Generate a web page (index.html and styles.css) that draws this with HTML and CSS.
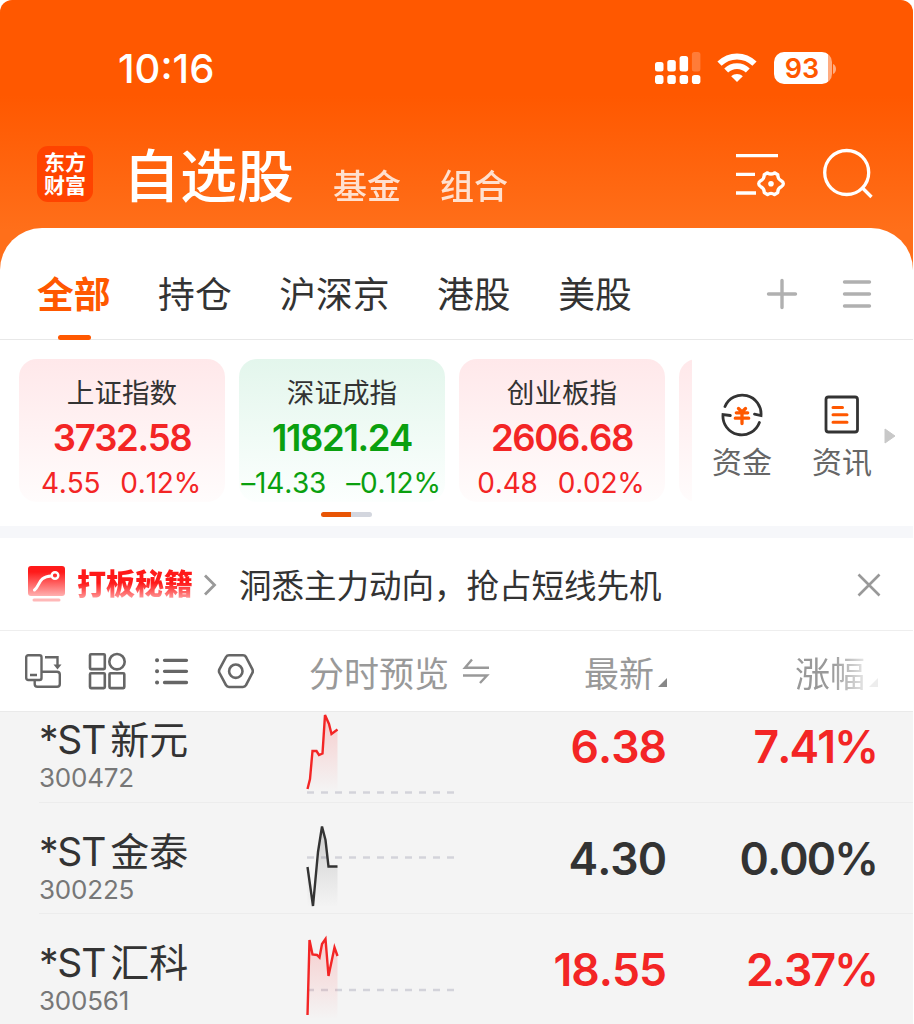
FILE: index.html
```html
<!DOCTYPE html>
<html lang="zh-CN">
<head>
  <meta charset="UTF-8">
  <meta name="viewport" content="width=device-width, initial-scale=1.0">
  <title>自选股</title>
  <link rel="stylesheet" href="styles.css">
</head>
<body>
  <div class="app">
    <header class="header">
      <div class="status-bar">
        <span class="time">10:16</span>
        <div class="status-icons">
          <svg class="signal" width="46" height="34" viewBox="0 0 46 34" fill="#fff">
            <rect x="0" y="10" width="8.5" height="9.5" rx="2.5"/>
            <rect x="12.3" y="8" width="8.5" height="11.5" rx="2.5"/>
            <rect x="24.6" y="4" width="8.5" height="15.5" rx="2.5"/>
            <rect x="36.9" y="0" width="8.5" height="19.5" rx="2.5" opacity=".22"/>
            <rect x="0" y="23" width="8.5" height="9" rx="2.8"/>
            <rect x="12.3" y="23" width="8.5" height="9" rx="2.8"/>
            <rect x="24.6" y="23" width="8.5" height="9" rx="2.8"/>
            <rect x="36.9" y="23" width="8.5" height="9" rx="2.8"/>
          </svg>
          <svg class="wifi" width="40" height="34" viewBox="0 0 40 34">
            <path d="M2.500 11.700C12.500 2 27.500 2 37.500 11.700" fill="none" stroke="#fff" stroke-width="6"/>
            <path d="M9.200 18.500C15.200 12.700 24.800 12.700 30.800 18.500" fill="none" stroke="#fff" stroke-width="5.600"/>
            <path d="M14.200 24.200C17.500 21.100 22.500 21.100 25.800 24.200L20 30Z" fill="#fff"/>
          </svg>
          <div class="battery"><span>93</span></div>
          <svg class="battery-tip" width="4" height="10" viewBox="0 0 4 10"><path d="M0 0C4 1.500 4 8.500 0 10Z" fill="#fff" opacity=".5"/></svg>
        </div>
      </div>
      <div class="title-bar">
        <div class="logo">东方<br>财富</div>
        <h1>自选股</h1>
        <a class="sub">基金</a>
        <a class="sub">组合</a>
        <svg class="manage" width="52" height="48" viewBox="0 0 52 48" fill="none" stroke="#fff" stroke-width="3.3">
          <path d="M1 4.700H43M1 23.300H20M1 42H21"/>
          <path stroke-linejoin="round" d="M32.500 21.800Q36 24.300 39.500 21.800L42.800 23.700Q42.500 27.800 46.200 29.700Q48.500 31 48.300 32.700Q48.500 34.400 46.200 35.700Q42.500 37.600 42.800 41.500L39.500 43.600Q36 41.200 32.500 43.600L29.200 41.500Q29.500 37.600 25.800 35.700Q23.700 34.400 23.700 32.700Q23.700 31 25.800 29.700Q29.500 27.800 29.200 23.700Z"/>
          <circle cx="36" cy="32.700" r="2.800" fill="#fff" stroke="none"/>
        </svg>
        <svg class="search" width="52" height="52" viewBox="0 0 52 52" fill="none" stroke="#fff" stroke-width="3.300">
          <circle cx="24.700" cy="24.500" r="22"/>
          <path d="M39.500 39L49.500 49"/>
        </svg>
      </div>
    </header>

    <main class="panel">
      <nav class="tabs">
        <a class="tab active">全部</a>
        <a class="tab">持仓</a>
        <a class="tab">沪深京</a>
        <a class="tab">港股</a>
        <a class="tab">美股</a>
        <svg class="add" width="32" height="32" viewBox="0 0 32 32" stroke="#b0b0b0" stroke-width="3.400" stroke-linecap="round"><path d="M2.500 16H29.500M16 2.500V29.500"/></svg>
        <svg class="menu" width="30" height="32" viewBox="0 0 30 32" stroke="#b0b0b0" stroke-width="3.400" stroke-linecap="round"><path d="M2.500 4H27.500M2.500 16H27.500M2.500 28H27.500"/></svg>
      </nav>

      <section class="market">
        <div class="cards">
          <div class="card up">
            <div class="card-name">上证指数</div>
            <div class="card-value">3732.58</div>
            <div class="card-change"><span>4.55</span><span>0.12%</span></div>
          </div>
          <div class="card down">
            <div class="card-name">深证成指</div>
            <div class="card-value">11821.24</div>
            <div class="card-change"><span>–14.33</span><span>–0.12%</span></div>
          </div>
          <div class="card up">
            <div class="card-name">创业板指</div>
            <div class="card-value">2606.68</div>
            <div class="card-change"><span>0.48</span><span>0.02%</span></div>
          </div>
          <div class="card up"></div>
        </div>
        <div class="shortcut">
          <svg width="44" height="44" viewBox="0 0 44 44" fill="none" stroke="#333" stroke-width="2.800" stroke-linecap="round">
            <path d="M5 13.500A18.800 18.800 0 0 1 41 22.500L34.500 21.200"/>
            <path d="M39.400 29.500A18.800 18.800 0 0 1 3 21.500L10.300 22.500"/>
            <path stroke="#ff5800" stroke-width="3.300" d="M18.500 15.500L22 19L25.500 15.500M16.300 19.800H27.700M15.300 25.200H28.700M22 19.800V30.500"/>
          </svg>
          <span>资金</span>
        </div>
        <div class="shortcut">
          <svg width="44" height="44" viewBox="0 0 44 44" fill="none" stroke="#333" stroke-width="2.800" stroke-linecap="round">
            <rect x="6" y="4" width="31.500" height="35" rx="2.500"/>
            <path stroke="#ff5800" stroke-width="3" d="M13 14.500H22.500M13 21.800H27M13 29.200H27"/>
          </svg>
          <span>资讯</span>
        </div>
        <svg class="more" width="12" height="16" viewBox="0 0 12 16"><path d="M1 1L11 8L1 15Z" fill="#c8c8c8" stroke="#c8c8c8" stroke-linejoin="round"/></svg>
      </section>
      <div class="pager"><i></i></div>

      <section class="promo">
        <svg class="promo-icon" width="38" height="37" viewBox="0 0 38 37">
          <defs>
            <linearGradient id="promo-red" x1="0" y1="0" x2="0" y2="1">
              <stop offset=".2" stop-color="#ff1a1a"/>
              <stop offset="1" stop-color="#ffb0b0"/>
            </linearGradient>
          </defs>
          <rect width="37" height="30" rx="3" fill="url(#promo-red)"/>
          <path d="M6.500 24C12 20 10 10.500 23.500 10" fill="none" stroke="#fff" stroke-width="3" stroke-linecap="round"/>
          <circle cx="27" cy="9.500" r="3.300" fill="none" stroke="#fff" stroke-width="2.400"/>
          <rect x="4.500" y="32.500" width="28" height="3" rx="1.500" fill="#ffb8b8"/>
        </svg>
        <strong class="promo-title">打板秘籍</strong>
        <svg class="promo-arrow" width="14" height="22" viewBox="0 0 14 22" fill="none" stroke="#999" stroke-width="2.800"><path d="M2 1.500L11.500 11L2 20.500"/></svg>
        <span class="promo-text">洞悉主力动向，抢占短线先机</span>
        <svg class="close" width="24" height="24" viewBox="0 0 24 24" stroke="#999" stroke-width="2.600"><path d="M1.500 1.500L22.500 22.500M22.500 1.500L1.500 22.500"/></svg>
      </section>

      <section class="list-head">
        <div class="tools">
          <svg width="38" height="38" viewBox="0 0 38 38" fill="none" stroke="#666" stroke-width="2.400">
            <rect x="2.200" y="3.200" width="15.300" height="24.800" rx="2"/>
            <path d="M6 23H13M18 19.700H33Q35.800 19.700 35.800 22.500V32Q35.800 34.800 33 34.800H13.500Q10.700 34.800 10.700 32V28"/>
            <path d="M21 5.200H33.500V14"/>
            <path d="M29.500 12.500H37.500L33.500 17.500Z" fill="#666" stroke="none"/>
          </svg>
          <svg width="38" height="38" viewBox="0 0 38 38" fill="none" stroke="#666" stroke-width="2.600">
            <rect x="2" y="2.300" width="14.800" height="14.800" rx="1"/>
            <circle cx="29" cy="9.700" r="7.700"/>
            <rect x="2" y="21.300" width="14.800" height="14.800" rx="1"/>
            <rect x="21.500" y="21.300" width="14.800" height="14.800" rx="1"/>
          </svg>
          <svg width="38" height="38" viewBox="0 0 38 38" stroke="#666" stroke-width="3.300" stroke-linecap="round">
            <path d="M12.500 8.300H34.500M12.500 19.300H34.500M12.500 30.500H34.500"/>
            <path stroke-width="4" d="M5 8.300H5.100M5 19.300H5.100M5 30.500H5.100"/>
          </svg>
          <svg width="38" height="38" viewBox="0 0 38 38" fill="none" stroke="#666" stroke-width="2.600">
            <path stroke-linejoin="round" d="M13 3.200H27Q29 3.200 30 5L36.300 17.200Q37.300 19.200 36.300 21L30 33.200Q29 35 27 35H13Q11 35 10 33.200L3.500 21Q2.500 19.200 3.500 17.200L10 5Q11 3.200 13 3.200Z"/>
            <circle cx="19.800" cy="19.200" r="6.700"/>
          </svg>
        </div>
        <div class="col-preview">
          <span>分时预览</span>
          <svg width="28" height="28" viewBox="0 0 28 28" fill="none" stroke="#999" stroke-width="2.400"><path d="M27 10.700H3L10 2.500M1 18.500H25L18 26"/></svg>
        </div>
        <div class="col-price">最新<i class="sort"></i></div>
        <div class="col-rate">涨幅<i class="sort"></i></div>
      </section>

      <section class="list">
        <div class="row">
          <div class="stock">
            <div class="name">*ST<b>新元</b></div>
            <div class="code">300472</div>
          </div>
          <svg class="spark" width="160" height="111" viewBox="0 0 160 111" fill="none">
            <defs>
              <linearGradient id="fill-red" x1="0" y1="0" x2="0" y2="1">
                <stop offset="0" stop-color="#ff3030" stop-opacity=".2"/>
                <stop offset="1" stop-color="#ff3030" stop-opacity="0"/>
              </linearGradient>
              <linearGradient id="fill-gray" x1="0" y1="0" x2="0" y2="1">
                <stop offset="0" stop-color="#333" stop-opacity=".2"/>
                <stop offset="1" stop-color="#333" stop-opacity="0"/>
              </linearGradient>
            </defs>
            <path class="base" d="M7 101.500H154"/>
            <path fill="url(#fill-red)" d="M7.500 98L10 88L12.500 60H16.500L19 64L22.500 62.500L25 24L29 33L31.500 43L37.500 38.500V101H7.500Z"/>
            <path class="line red" d="M7.500 98L10 88L12.500 60H16.500L19 64L22.500 62.500L25 24L29 33L31.500 43L37.500 38.500"/>
          </svg>
          <div class="price red">6.38</div>
          <div class="rate red">7.41%</div>
        </div>
        <div class="row">
          <div class="stock">
            <div class="name">*ST<b>金泰</b></div>
            <div class="code">300225</div>
          </div>
          <svg class="spark" width="160" height="111" viewBox="0 0 160 111" fill="none">
            <path class="base" d="M7 55.500H154"/>
            <path fill="url(#fill-gray)" d="M7.500 65L13 104L18 50L22 24.500L25.500 38L28.500 64.500H37.500V105H7.500Z"/>
            <path class="line" d="M7.500 65L13 104L18 50L22 24.500L25.500 38L28.500 64.500H37.500"/>
          </svg>
          <div class="price">4.30</div>
          <div class="rate">0.00%</div>
        </div>
        <div class="row">
          <div class="stock">
            <div class="name">*ST<b>汇科</b></div>
            <div class="code">300561</div>
          </div>
          <svg class="spark" width="160" height="111" viewBox="0 0 160 111" fill="none">
            <path class="base" d="M7 76H154"/>
            <path fill="url(#fill-red)" d="M7.500 101L9.500 26L12.500 40.500L17 41L19.500 43.500L22 30L25.500 25L28.500 62L34.500 33.500L37.500 42V105H7.500Z"/>
            <path class="line red" d="M7.500 101L9.500 26L12.500 40.500L17 41L19.500 43.500L22 30L25.500 25L28.500 62L34.500 33.500L37.500 42"/>
          </svg>
          <div class="price red">18.55</div>
          <div class="rate red">2.37%</div>
        </div>
      </section>
    </main>
  </div>
</body>
</html>
```

FILE: styles.css
```css
* {
  box-sizing: border-box;
}

body {
  margin: 0;
  background: #fff;
  color: #333;
  font-family: Inter, "Noto Sans CJK SC", sans-serif;
}

svg {
  display: block;
  flex: none;
}

.app {
  width: 913px;
  height: 1024px;
  overflow: hidden;
  border-radius: 12px 12px 0 0;
  background: linear-gradient(#ff5800 95px, #ff6f1a 230px);
}

/* header */
.header {
  height: 228px;
}

.status-bar {
  display: flex;
  justify-content: space-between;
  height: 136px;
  padding: 44px 76px 0 118px;
  color: #fff;
}

.time {
  font-size: 40px;
  line-height: 50px;
  font-weight: 500;
}

.status-icons {
  display: flex;
  padding-top: 8px;
}

.wifi {
  margin-left: 16px;
}

.battery {
  width: 58px;
  height: 32px;
  margin-left: 17px;
  border-radius: 10px;
  background: linear-gradient(90deg, #fff 54px, rgba(255, 255, 255, 0.5) 54px);
  color: #ff5800;
  font-size: 27px;
  line-height: 33px;
  font-weight: 600;
  text-align: center;
  padding-right: 2px;
}

.battery-tip {
  margin: 12px 0 0 1px;
}

.title-bar {
  display: flex;
  height: 92px;
  padding-left: 37px;
  color: #fff;
}

.logo {
  width: 56px;
  height: 56px;
  margin-top: 10px;
  padding-top: 5px;
  border-radius: 11px;
  background: #ff4300;
  font-size: 21px;
  line-height: 23px;
  font-weight: 700;
  text-align: center;
}

h1 {
  width: 175px;
  margin: 1px 0 0 30px;
  font-size: 57px;
  line-height: 80px;
  font-weight: 500;
  white-space: nowrap;
}

.sub {
  width: 68px;
  margin: 26px 0 0 35px;
  font-size: 34px;
  line-height: 50px;
  font-weight: 500;
  white-space: nowrap;
  opacity: 0.8;
}

.sub + .sub {
  margin-left: 39px;
}

.manage {
  margin: 15px 0 0 227px;
}

.search {
  margin: 12px 0 0 35px;
}

/* tabs */
.panel {
  height: 796px;
  border-radius: 42px 42px 0 0;
  background: #fff;
}

.tabs {
  display: flex;
  align-items: center;
  height: 112px;
  padding: 20px 0 0 37px;
  border-bottom: 1px solid #e8e8e8;
}

.tab {
  position: relative;
  margin-right: 47.5px;
  padding-top: 2px;
  font-size: 36.8px;
  line-height: 90px;
}

.tab.active {
  color: #ff5800;
  font-weight: 700;
}

.tab.active::after {
  content: "";
  position: absolute;
  left: 21px;
  bottom: 0;
  width: 33px;
  height: 5px;
  border-radius: 3px;
  background: #ff5800;
}

.add {
  margin-left: auto;
}

.menu {
  margin: 0 41px 0 44px;
}

/* index cards */
.market {
  display: flex;
  height: 162px;
  padding: 19px 0 0 19px;
}

.cards {
  display: flex;
  gap: 14px;
  width: 673px;
  overflow: hidden;
}

.card {
  flex: none;
  width: 206px;
  height: 143px;
  padding-top: 14px;
  border-radius: 18px;
  text-align: center;
  white-space: nowrap;
}

.card.up {
  color: #f32525;
  background: linear-gradient(#ffe8ea, #fffcfc);
}

.card.down {
  color: #0aa00f;
  background: linear-gradient(#e3f6ec, #fcfffe);
}

.card-name {
  color: #333;
  font-size: 27.6px;
  line-height: 40px;
}

.card-value {
  font-size: 36.5px;
  line-height: 50px;
  font-weight: 600;
  font-kerning: none;
  letter-spacing: -1.4px;
}

.card-change {
  display: flex;
  justify-content: center;
  gap: 20px;
  padding-right: 2px;
  font-size: 28px;
  line-height: 40px;
  font-kerning: none;
  letter-spacing: -0.2px;
}

.shortcut {
  display: flex;
  flex-direction: column;
  align-items: center;
  width: 60px;
  margin-left: 20px;
  padding-top: 34px;
  color: #666;
  font-size: 30px;
  line-height: 50px;
}

.shortcut + .shortcut {
  margin-left: 40px;
}

.more {
  margin: 69px 0 0 12px;
}

.pager {
  height: 36px;
  padding: 10px 0 0 321px;
  border-bottom: 12px solid #f6f7fa;
}

.pager i {
  display: block;
  width: 51px;
  height: 5px;
  border-radius: 3px;
  background: linear-gradient(90deg, #e85505 30px, #d3d6de 30px);
}

/* promo line */
.promo {
  display: flex;
  align-items: center;
  height: 93px;
  padding: 1px 0 0 28px;
  border-bottom: 1px solid #eee;
}

.promo-title {
  margin-left: 11px;
  font-size: 29px;
  line-height: 40px;
  font-weight: 900;
  background: linear-gradient(#ff1a1a 45%, #ffb0b0 90%);
  -webkit-background-clip: text;
  background-clip: text;
  color: transparent;
}

.promo-arrow {
  margin-left: 10px;
}

.promo-text {
  margin-left: 22px;
  padding-top: 5px;
  font-size: 32.5px;
  line-height: 50px;
}

.close {
  margin: 0 32px 0 auto;
}

/* list header */
.list-head {
  display: flex;
  align-items: center;
  height: 81px;
  padding-left: 24px;
  border-bottom: 1px solid #eaeaea;
  color: #999;
  font-size: 35px;
}

.tools {
  display: flex;
  gap: 26px;
  width: 285px;
}

.col-preview {
  display: flex;
  align-items: center;
  gap: 13px;
  width: 181px;
}

.col-price,
.col-rate {
  display: flex;
  align-items: flex-end;
  justify-content: flex-end;
  width: 177px;
}

.col-rate {
  width: 211px;
  -webkit-mask-image: linear-gradient(90deg, #000 165px, rgba(0, 0, 0, 0.15) 202px);
  mask-image: linear-gradient(90deg, #000 165px, rgba(0, 0, 0, 0.15) 202px);
}

.sort {
  margin: 0 0 10px 4px;
  border-left: 9px solid transparent;
  border-bottom: 9px solid #888;
}

/* stock rows */
.list {
  height: 313px;
  overflow: hidden;
  background: #f4f4f4;
}

.row {
  display: flex;
  height: 111.5px;
  margin-left: 39px;
  border-bottom: 1px solid #ececec;
}

.row:first-child {
  margin-top: -21px;
}

.stock {
  width: 261px;
  padding-top: 22px;
}

.name {
  font-size: 39px;
  line-height: 54px;
  letter-spacing: -1.2px;
  white-space: nowrap;
}

.name b {
  margin-left: 5px;
  font-weight: 400;
  letter-spacing: 0;
}

.code {
  color: #777;
  font-size: 26px;
  line-height: 21px;
  letter-spacing: -0.2px;
}

.spark {
  margin-top: -0.5px;
}

.base {
  stroke: #d3d3da;
  stroke-width: 2.4;
  stroke-dasharray: 7 7;
}

.line {
  stroke: #333;
  stroke-width: 2.4;
}

.line.red {
  stroke: #f32525;
}

.price,
.rate {
  width: 206px;
  font-size: 44.5px;
  line-height: 113px;
  font-weight: 600;
  font-kerning: none;
  letter-spacing: -1px;
  text-align: right;
}

.rate {
  width: 211px;
  letter-spacing: -1.9px;
}

.price.red,
.rate.red {
  color: #f32525;
}
```
